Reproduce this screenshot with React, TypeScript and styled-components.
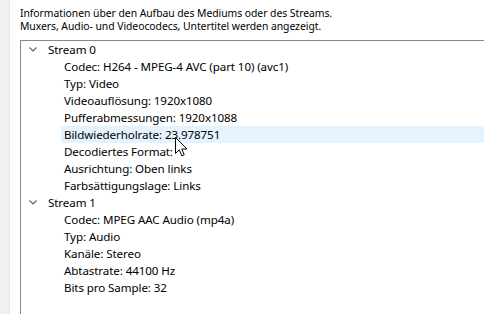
import React from 'react';
import styled, { createGlobalStyle } from 'styled-components';

const GlobalStyle = createGlobalStyle`
  html, body {
    margin: 0;
    padding: 0;
    background: #ffffff;
  }
  body {
    font-family: 'Noto Sans', 'Open Sans', sans-serif;
    font-size: 12px;
    color: #000;
    overflow: hidden;
  }
`;

interface IStream {
  name: string;
  props: string[];
}

const streams: IStream[] = [
  {
    name: 'Stream 0',
    props: [
      'Codec: H264 - MPEG-4 AVC (part 10) (avc1)',
      'Typ: Video',
      'Videoauflösung: 1920x1080',
      'Pufferabmessungen: 1920x1088',
      'Bildwiederholrate: 23.978751',
      'Decodiertes Format:',
      'Ausrichtung: Oben links',
      'Farbsättigungslage: Links',
    ],
  },
  {
    name: 'Stream 1',
    props: [
      'Codec: MPEG AAC Audio (mp4a)',
      'Typ: Audio',
      'Kanäle: Stereo',
      'Abtastrate: 44100 Hz',
      'Bits pro Sample: 32',
    ],
  },
];

const Window = styled.div`
  display: flex;
  width: 484px;
  height: 314px;
  overflow: hidden;
`;

const SideStrip = styled.div`
  width: 9px;
  flex: none;
  background: #f0f0f0;
  border-right: 1px solid #e4e4e4;
`;

const Content = styled.div`
  flex: 1;
  display: flex;
  flex-direction: column;
  padding: 7px 0 0 10px;
  min-width: 0;
`;

const Description = styled.div`
  line-height: 13px;
  font-size: 10.4px;
  letter-spacing: -0.05px;
  margin-bottom: 7px;
  white-space: nowrap;
`;

const TreeBox = styled.div`
  position: relative;
  flex: 1;
  margin-right: -20px;
  margin-bottom: -20px;
  border: 1px solid #828790;
  padding-left: 4px;
`;

const Row = styled.div<{ $level: number; $hover?: boolean }>`
  display: flex;
  align-items: center;
  height: 17px;
  margin-left: ${(p) => (p.$level === 0 ? 0 : 36)}px;
  padding-left: ${(p) => (p.$level === 0 ? 4 : 3)}px;
  background: ${(p) => (p.$hover ? '#e5f3ff' : 'transparent')};
  white-space: nowrap;
  font-size: 11.6px;
  letter-spacing: -0.1px;
`;

const Chevron = styled.svg`
  width: 8px;
  height: 5px;
  margin-right: 11px;
  flex: none;
`;

const Cursor = styled.svg`
  position: absolute;
  left: 154px;
  top: 96px;
  width: 13px;
  height: 20px;
`;

export default function App() {
  return (
    <>
      <GlobalStyle />
      <Window>
        <SideStrip />
        <Content>
          <Description>
            Informationen über den Aufbau des Mediums oder des Streams.
            <br />
            Muxers, Audio- und Videocodecs, Untertitel werden angezeigt.
          </Description>
          <TreeBox>
            {streams.map((stream) => (
              <React.Fragment key={stream.name}>
                <Row $level={0}>
                  <Chevron viewBox="0 0 8 5">
                    <path d="M0.5 0.5 L4 4 L7.5 0.5" fill="none" stroke="#606060" strokeWidth="1.1" />
                  </Chevron>
                  {stream.name}
                </Row>
                {stream.props.map((prop) => (
                  <Row key={prop} $level={1} $hover={prop.startsWith('Bildwiederholrate')}>
                    {prop}
                  </Row>
                ))}
              </React.Fragment>
            ))}
            <Cursor viewBox="0 0 13 20">
              <path
                d="M0.5 0.5 L0.5 16.5 L4.3 12.8 L6.8 18.8 L9.2 17.8 L6.8 12 L12 12 Z"
                fill="#ffffff"
                stroke="#000000"
                strokeWidth="1"
                strokeLinejoin="round"
              />
            </Cursor>
          </TreeBox>
        </Content>
      </Window>
    </>
  );
}
